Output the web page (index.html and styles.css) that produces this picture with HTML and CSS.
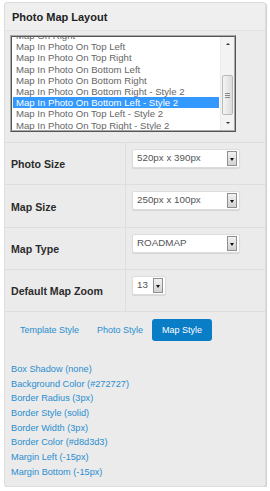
FILE: index.html
```html
<!DOCTYPE html>
<html>
<head>
<meta charset="utf-8">
<link rel="stylesheet" href="styles.css">
</head>
<body>
<div class="panel">
  <div class="panel-head">Photo Map Layout</div>
  <div class="list-wrap">
    <div class="listbox">
      <div class="list-view">
        <ul class="items">
          <li>Map On Right</li>
          <li>Map In Photo On Top Left</li>
          <li>Map In Photo On Top Right</li>
          <li>Map In Photo On Bottom Left</li>
          <li>Map In Photo On Bottom Right</li>
          <li>Map In Photo On Bottom Right - Style 2</li>
          <li class="sel">Map In Photo On Bottom Left - Style 2</li>
          <li>Map In Photo On Top Left - Style 2</li>
          <li>Map In Photo On Top Right - Style 2</li>
        </ul>
      </div>
      <div class="vscroll">
        <div class="sb-arrow up"></div>
        <div class="sb-track"><div class="sb-thumb"><span></span><span></span><span></span></div></div>
        <div class="sb-arrow down"></div>
      </div>
    </div>
  </div>
  <div class="rows">
    <div class="row">
      <div class="lbl">Photo Size</div>
      <div class="val"><div class="sel-box wide"><span>520px x 390px</span><i class="dd"></i></div></div>
    </div>
    <div class="row">
      <div class="lbl">Map Size</div>
      <div class="val"><div class="sel-box wide"><span>250px x 100px</span><i class="dd"></i></div></div>
    </div>
    <div class="row">
      <div class="lbl">Map Type</div>
      <div class="val"><div class="sel-box wide"><span>ROADMAP</span><i class="dd"></i></div></div>
    </div>
    <div class="row">
      <div class="lbl">Default Map Zoom</div>
      <div class="val"><div class="sel-box small"><span>13</span><i class="dd"></i></div></div>
    </div>
  </div>
  <div class="tabs">
    <span class="tab">Template Style</span>
    <span class="tab">Photo Style</span>
    <span class="tab active">Map Style</span>
  </div>
  <ul class="links">
    <li>Box Shadow (none)</li>
    <li>Background Color (#272727)</li>
    <li>Border Radius (3px)</li>
    <li>Border Style (solid)</li>
    <li>Border Width (3px)</li>
    <li>Border Color (#d8d3d3)</li>
    <li>Margin Left (-15px)</li>
    <li>Margin Bottom (-15px)</li>
  </ul>
</div>
</body>
</html>
```
FILE: styles.css
```css
* { box-sizing: border-box; }
html, body { margin: 0; padding: 0; background: #fff; }
body { font-family: "Liberation Sans", Arial, sans-serif; }

.panel {
  margin: 2px 0 0 4px;
  width: 262px;
  height: 485px;
  background: #ebebeb;
  border: 1px solid #dcdcdc;
  border-radius: 3px;
  box-shadow: 1px 1px 1px #d0d0d0;
  display: flex;
  flex-direction: column;
}

.panel-head {
  height: 28px;
  padding: 0 0 0 7px;
  line-height: 28px;
  font-size: 11px;
  font-weight: bold;
  color: #222;
  background: #efefef;
  border-bottom: 1px solid #e2e2e2;
  border-radius: 3px 3px 0 0;
}

.list-wrap {
  padding: 4px 0 10px 5px;
  border-bottom: 1px solid #dedede;
}

.listbox {
  width: 226px;
  height: 97px;
  border: 2px solid #a9a9a9;
  border-style: ridge;
  background: #fff;
  display: flex;
}

.list-view {
  flex: 1;
  overflow: hidden;
  padding: 1px 1px 0 1px;
}

.items {
  list-style: none;
  margin: -8px 0 0 0;
  padding: 0;
  font-size: 9.6px;
  color: #666;
}
.items li {
  height: 11.2px;
  line-height: 11.2px;
  padding-left: 3px;
  white-space: nowrap;
}
.items li.sel {
  background: #3399ff;
  color: #fff;
}

.vscroll {
  width: 14px;
  background: #f3f3f3;
  border-left: 1px solid #eaeaea;
  display: flex;
  flex-direction: column;
}
.sb-arrow {
  height: 14px;
  position: relative;
}
.sb-arrow::after {
  content: "";
  position: absolute;
  left: 5px;
  top: 6px;
  border-left: 2px solid transparent;
  border-right: 2px solid transparent;
}
.sb-arrow.up::after { border-bottom: 2px solid #333; }
.sb-arrow.down::after { border-top: 2px solid #333; }
.sb-track {
  flex: 1;
  display: flex;
  flex-direction: column;
  justify-content: flex-end;
  padding: 0 1px 1px 1px;
}
.sb-thumb {
  height: 40px;
  border: 1px solid #b9b9b9;
  border-radius: 2px;
  background: linear-gradient(to right, #f4f4f4, #dcdcdc);
  display: flex;
  flex-direction: column;
  justify-content: center;
  align-items: center;
  gap: 1px;
}
.sb-thumb span {
  display: block;
  width: 5px;
  height: 1px;
  background: #888;
}

.rows { display: flex; flex-direction: column; }
.row {
  height: 42px;
  display: flex;
  border-bottom: 1px solid #dedede;
}
.row:nth-child(2) { height: 43px; }
.lbl {
  width: 121px;
  border-right: 1px solid #dedede;
  padding: 1px 0 0 6px;
  display: flex;
  align-items: center;
  font-size: 10.6px;
  font-weight: bold;
  color: #2b2b2b;
}
.val {
  flex: 1;
  padding: 6px 0 0 6px;
}
.sel-box {
  height: 19px;
  background: #fff;
  border: 1px solid #dcdcdc;
  border-radius: 2px;
  box-shadow: 0 1px 1px #d6d6d6;
  display: flex;
  align-items: flex-start;
  justify-content: space-between;
  padding: 1px 2px 0 4px;
  font-size: 9.8px;
  color: #555;
}
.sel-box span { line-height: 13px; }
.sel-box.wide { width: 108px; }
.sel-box.small { width: 34px; }
.dd {
  width: 10px;
  height: 15px;
  border: 1px solid #8f8f8f;
  background: linear-gradient(#f2f2f2, #d2d2d2);
  position: relative;
}
.dd::after {
  content: "";
  position: absolute;
  left: 2px;
  top: 6px;
  border-left: 2.5px solid transparent;
  border-right: 2.5px solid transparent;
  border-top: 3px solid #111;
}

.tabs {
  display: flex;
  padding: 7px 0 0 6px;
  height: 36px;
}
.tab {
  height: 22px;
  line-height: 22px;
  padding: 0 9px;
  font-size: 9px;
  color: #2a8dd0;
  border-radius: 3px;
}
.tab.active {
  background: #0a7dc7;
  color: #fff;
  padding: 0 10px;
}

.links {
  list-style: none;
  margin: 14px 0 0 0;
  padding: 0 0 0 6px;
  font-size: 9.2px;
  color: #2a8dd0;
}
.links li {
  height: 14.7px;
  line-height: 14.7px;
  white-space: nowrap;
}
```
